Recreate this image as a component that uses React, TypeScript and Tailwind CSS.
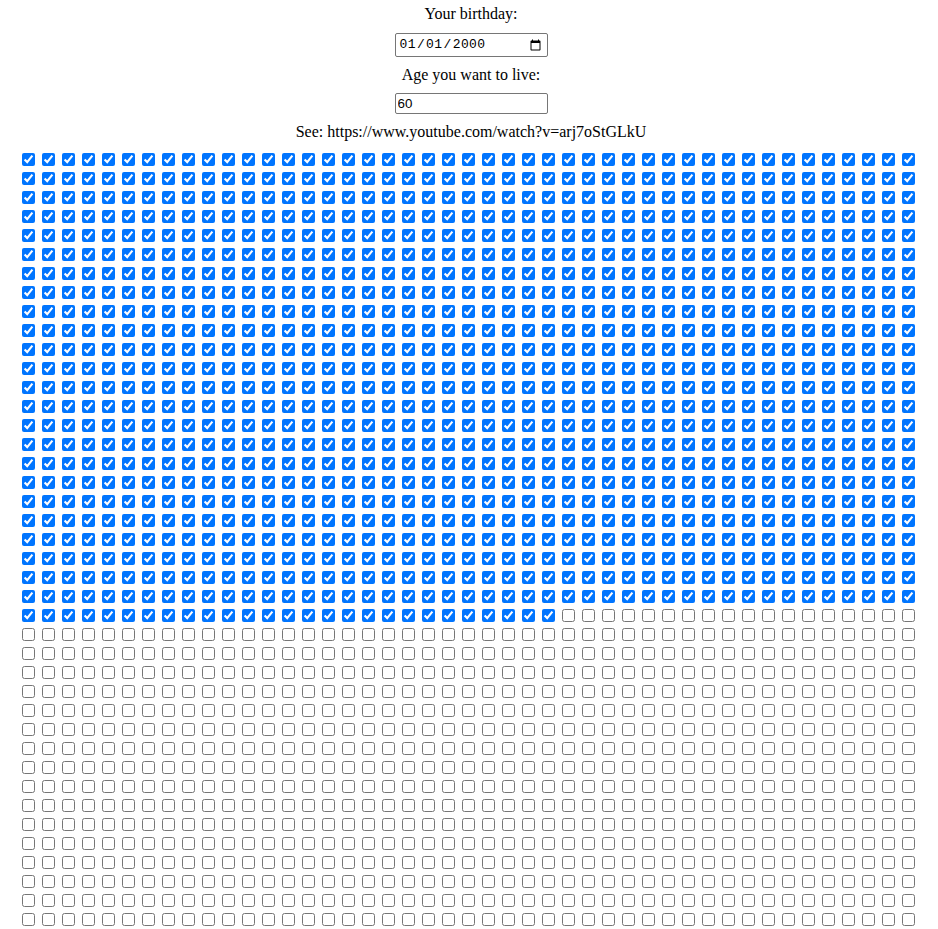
import React from 'react';

const COLS = 45;
const YEARS = 60;
const WEEKS = YEARS * 52;
const LIVED = 24 * COLS + 27;

const WeekBox: React.FC<{ done: boolean }> = ({ done }) => (
  <div className="w-[20px] h-[19px]">
    <input
      type="checkbox"
      checked={done}
      readOnly
      className="block w-[13px] h-[13px] ml-[3px] mt-[3px]"
    />
  </div>
);

const App: React.FC = () => {
  const weeks = React.useMemo(() => Array.from({ length: WEEKS }, (_, i) => i < LIVED), []);

  return (
    <div className="flex flex-col items-center font-['Liberation_Serif',serif] text-[16px] leading-[18px] text-black bg-white">
      <div className="mt-[5px] ml-[4px]">Your birthday:</div>
      <input
        type="date"
        defaultValue="2000-01-01"
        className="mt-[10px] ml-[4px] w-[153px] h-[24px] px-[3px] border border-[#767676] rounded-[2px] font-['Liberation_Mono',monospace] text-[13px] tracking-[0.4px]"
      />
      <div className="mt-[9px] ml-[4px]">Age you want to live:</div>
      <input
        type="number"
        defaultValue={60}
        className="mt-[9px] ml-[4px] w-[153px] h-[21px] px-[2px] border border-[#767676] rounded-[2px] font-['Liberation_Sans',sans-serif] text-[13.33px]"
      />
      <div className="mt-[9px] ml-[4px]">See: https://www.youtube.com/watch?v=arj7oStGLkU</div>
      <div className="mt-[9px] grid grid-cols-[repeat(45,20px)]">
        {weeks.map((done, i) => (
          <WeekBox key={i} done={done} />
        ))}
      </div>
    </div>
  );
};

export default App;
